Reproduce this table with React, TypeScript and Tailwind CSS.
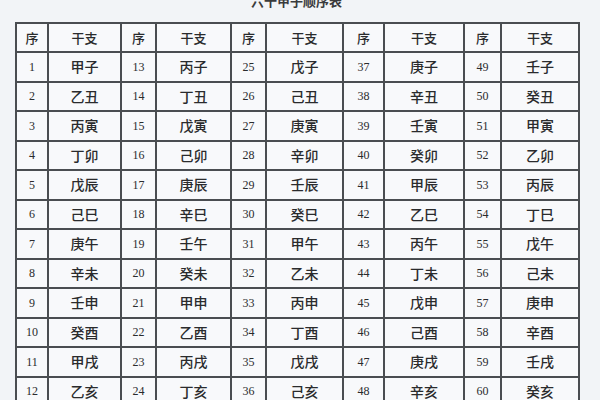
import React from 'react';

const stems = ['甲', '乙', '丙', '丁', '戊', '己', '庚', '辛', '壬', '癸'];
const branches = ['子', '丑', '寅', '卯', '辰', '巳', '午', '未', '申', '酉', '戌', '亥'];

// 60 pairs, numbered from 1
const pairs = Array.from({ length: 60 }, (_, i) => stems[i % 10] + branches[i % 12]);

const colWidths = ['w-[32px]', 'w-[73px]', 'w-[35px]', 'w-[75px]', 'w-[35px]', 'w-[77px]', 'w-[41px]', 'w-[80px]', 'w-[37px]', 'w-[78px]'];

const cell = 'border-2 border-[#4a4d51] text-center align-middle p-0';

const App: React.FC = () => {
  const rows = Array.from({ length: 12 }, (_, r) => r);

  return (
    <div className="w-[600px] h-[400px] overflow-hidden bg-[#f2f4f7] text-[#2a2b2d]" style={{ fontFamily: '"Noto Sans CJK SC", "Noto Sans", sans-serif' }}>
      <div className="-mt-[9px] h-[31px] w-[563px] ml-[15px] text-center text-[13px] font-bold leading-[20px] text-[#3a3b3d]">
        六十甲子顺序表
      </div>

      <table className="ml-[15px] w-[563px] table-fixed border-collapse bg-[#f8f9fb]">
        <colgroup>
          {colWidths.map((w, i) => (
            <col key={i} className={w} />
          ))}
        </colgroup>
        <thead>
          <tr className="h-[29px]">
            {colWidths.map((_, i) => (
              <th key={i} className={`${cell} text-[13px] font-medium`}>
                {i % 2 === 0 ? '序' : '干支'}
              </th>
            ))}
          </tr>
        </thead>
        <tbody>
          {rows.map((r) => (
            <tr key={r} className="h-[29.5px]">
              {[0, 1, 2, 3, 4].map((c) => {
                const n = c * 12 + r + 1;
                return (
                  <React.Fragment key={c}>
                    <td className={`${cell} text-[12px]`} style={{ fontFamily: '"Liberation Serif", "Noto Sans CJK SC", serif' }}>
                      {n}
                    </td>
                    <td className={`${cell} text-[14px] font-medium`}>{pairs[n - 1]}</td>
                  </React.Fragment>
                );
              })}
            </tr>
          ))}
        </tbody>
      </table>

      <div className="relative">
        <span className="absolute right-[24px] -top-[9px] text-[9px] leading-[9px] tracking-wide text-[#d0d3d8]">
          www.smxs.com.cn
        </span>
      </div>
    </div>
  );
};

export default App;
